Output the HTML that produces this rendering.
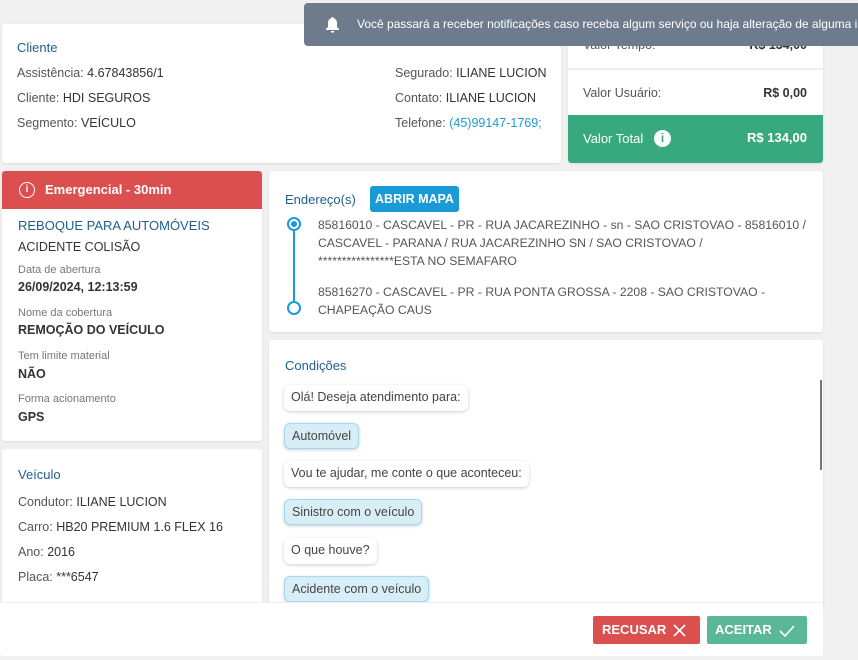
<!DOCTYPE html>
<html><head><meta charset="utf-8"><style>
*{box-sizing:border-box;margin:0;padding:0}
body{width:858px;height:660px;background:#f0f0f0;font-family:"Liberation Sans",sans-serif;font-size:12.5px;color:#555;position:relative;overflow:hidden}
.card{position:absolute;background:#fff;border-radius:3px;box-shadow:0 1px 2px rgba(0,0,0,.08)}
.t{color:#1f5f8b;font-size:13px}
.abs{position:absolute;white-space:nowrap}
.dk{color:#333}
.lbl{font-size:11px;color:#777}
.b{font-weight:bold;color:#333}
.bub{position:absolute;left:23px;height:26px;line-height:24px;padding:0 7px;border-radius:6px;background:#fff;box-shadow:0 1px 3px rgba(0,0,0,.2);color:#444;white-space:nowrap;font-size:12.5px}
.bub.s{background:#d8eef7;border:1px solid #a8d8ee}
</style></head><body>
<div class="card" style="left:2px;top:24px;width:559px;height:139px">
 <div class="abs t" style="left:15px;top:16px">Cliente</div>
 <div class="abs" style="left:15px;top:42px">Assistência: <span class="dk">4.67843856/1</span></div>
 <div class="abs" style="left:15px;top:67px">Cliente: <span class="dk">HDI SEGUROS</span></div>
 <div class="abs" style="left:15px;top:92px">Segmento: <span class="dk">VEÍCULO</span></div>
 <div class="abs" style="left:393px;top:42px">Segurado: <span class="dk">ILIANE LUCION</span></div>
 <div class="abs" style="left:393px;top:67px">Contato: <span class="dk">ILIANE LUCION</span></div>
 <div class="abs" style="left:393px;top:92px">Telefone: <span style="color:#1a9ad6">(45)99147-1769;</span></div>
</div>
<div class="card" style="left:568px;top:24px;width:255px;height:139px;overflow:hidden">
 <div class="abs" style="left:15px;top:14px">Valor Tempo:</div><div class="abs b" style="right:16px;top:14px">R$ 134,00</div>
 <div style="position:absolute;left:0;right:0;top:44px;border-top:2px solid #eee"></div>
 <div class="abs" style="left:15px;top:62px">Valor Usuário:</div><div class="abs b" style="right:16px;top:62px">R$ 0,00</div>
 <div style="position:absolute;left:0;right:0;top:91px;height:48px;background:#38a97f;border-radius:0 0 3px 3px">
  <div class="abs" style="left:15px;top:16px;color:#fff;font-size:13px">Valor Total</div>
  <div class="abs" style="left:86px;top:15px;width:17px;height:17px;border-radius:50%;background:#fff;color:#38a97f;font-weight:bold;font-size:12px;text-align:center;line-height:17px">i</div>
  <div class="abs" style="right:16px;top:15px;color:#fff;font-weight:bold;font-size:13px">R$ 134,00</div>
 </div>
</div>
<div style="position:absolute;left:304px;top:3px;width:554px;height:43px;background:#6e7b8c;border-radius:4px 0 0 4px;color:#fff;overflow:hidden">
 <svg style="position:absolute;left:21px;top:13px" width="15" height="17" viewBox="0 0 15 17"><path d="M7.5 1a1.3 1.3 0 0 1 1.3 1.3C11 3 12 5 12 7v4l2 2v1H1v-1l2-2V7c0-2 1-4 3.2-4.7A1.3 1.3 0 0 1 7.5 1z M5.8 15h3.4a1.7 1.7 0 0 1-3.4 0z" fill="#fff"/></svg>
 <div class="abs" style="left:53px;top:14px;font-size:12px">Você passará a receber notificações caso receba algum serviço ou haja alteração de alguma informação</div>
</div>
<div class="card" style="left:2px;top:171px;width:260px;height:270px;overflow:hidden">
 <div style="height:38px;background:#dc4f4f;color:#fff;position:relative">
  <div class="abs" style="left:17px;top:11px;width:16px;height:16px;border:1.6px solid #fff;border-radius:50%;text-align:center;font-size:10px;line-height:13px;font-weight:bold">i</div>
  <div class="abs" style="left:43px;top:11px;font-weight:bold;font-size:13px">Emergencial - 30min</div>
 </div>
 <div class="abs t" style="left:16px;top:47px">REBOQUE PARA AUTOMÓVEIS</div>
 <div class="abs dk" style="left:16px;top:69px">ACIDENTE COLISÃO</div>
 <div class="abs lbl" style="left:16px;top:93px">Data de abertura</div>
 <div class="abs b" style="left:16px;top:109px">26/09/2024, 12:13:59</div>
 <div class="abs lbl" style="left:16px;top:136px">Nome da cobertura</div>
 <div class="abs b" style="left:16px;top:152px">REMOÇÃO DO VEÍCULO</div>
 <div class="abs lbl" style="left:16px;top:179px">Tem limite material</div>
 <div class="abs b" style="left:16px;top:196px">NÃO</div>
 <div class="abs lbl" style="left:16px;top:222px">Forma acionamento</div>
 <div class="abs b" style="left:16px;top:239px">GPS</div>
</div>
<div class="card" style="left:2px;top:449px;width:260px;height:160px">
 <div class="abs t" style="left:16px;top:18px">Veículo</div>
 <div class="abs" style="left:16px;top:46px">Condutor: <span class="dk">ILIANE LUCION</span></div>
 <div class="abs" style="left:16px;top:71px">Carro: <span class="dk">HB20 PREMIUM 1.6 FLEX 16</span></div>
 <div class="abs" style="left:16px;top:96px">Ano: <span class="dk">2016</span></div>
 <div class="abs" style="left:16px;top:121px">Placa: <span class="dk">***6547</span></div>
</div>
<div class="card" style="left:269px;top:171px;width:554px;height:161px">
 <div class="abs t" style="left:16px;top:21px">Endereço(s)</div>
 <div class="abs" style="left:101px;top:15px;width:89px;height:26px;background:#1a9ad6;border-radius:3px;color:#fff;font-weight:bold;font-size:12.5px;text-align:center;line-height:26px">ABRIR MAPA</div>
 <div class="abs" style="left:18px;top:46px;width:14px;height:14px;border:2px solid #1a9ad6;border-radius:50%"><div style="margin:2px;width:6px;height:6px;border-radius:50%;background:#1a9ad6"></div></div>
 <div class="abs" style="left:24px;top:60px;width:2px;height:70px;background:#1a9ad6"></div>
 <div class="abs" style="left:18px;top:130px;width:14px;height:14px;border:2px solid #1a9ad6;border-radius:50%;background:#fff"></div>
 <div class="abs" style="left:49px;top:45px;line-height:18px;font-size:12.2px">85816010 - CASCAVEL - PR - RUA JACAREZINHO - sn - SAO CRISTOVAO - 85816010 /<br>CASCAVEL - PARANA / RUA JACAREZINHO SN / SAO CRISTOVAO /<br>****************ESTA NO SEMAFARO</div>
 <div class="abs" style="left:49px;top:112px;line-height:18px;font-size:12.2px">85816270 - CASCAVEL - PR - RUA PONTA GROSSA - 2208 - SAO CRISTOVAO -<br>CHAPEAÇÃO CAUS</div>
</div>
<div class="card" style="left:269px;top:340px;width:554px;height:270px;overflow:hidden">
 <div class="abs t" style="left:16px;top:18px">Condições</div>
 <div style="position:absolute;left:551px;top:40px;width:2px;height:90px;background:#777"></div>
 <div class="bub" style="left:15px;top:45px">Olá! Deseja atendimento para:</div>
 <div class="bub s" style="left:15px;top:83px">Automóvel</div>
 <div class="bub" style="left:15px;top:121px">Vou te ajudar, me conte o que aconteceu:</div>
 <div class="bub s" style="left:15px;top:159px">Sinistro com o veículo</div>
 <div class="bub" style="left:15px;top:198px">O que houve?</div>
 <div class="bub s" style="left:15px;top:236px">Acidente com o veículo</div>
</div>
<div style="position:absolute;left:0;top:602px;width:823px;height:54px;background:#fff;border-top:1px solid #eee;border-radius:0 0 3px 3px">
 <div class="abs" style="left:593px;top:13px;width:107px;height:28px;background:#dc4f4f;border-radius:2px;color:#fff;font-weight:bold;font-size:13px;line-height:28px;padding-left:9px">RECUSAR
  <svg style="position:absolute;left:80px;top:8px" width="13" height="13" viewBox="0 0 13 13"><path d="M1 1L12 12M12 1L1 12" stroke="#fff" stroke-width="1.6"/></svg></div>
 <div class="abs" style="left:707px;top:13px;width:100px;height:28px;background:#5bb896;border-radius:2px;color:#fff;font-weight:bold;font-size:13px;line-height:28px;padding-left:8px">ACEITAR
  <svg style="position:absolute;left:72px;top:9px" width="16" height="12" viewBox="0 0 16 12"><path d="M1 6L6 11L15 1" stroke="#fff" stroke-width="1.6" fill="none"/></svg></div>
</div>
</body></html>
